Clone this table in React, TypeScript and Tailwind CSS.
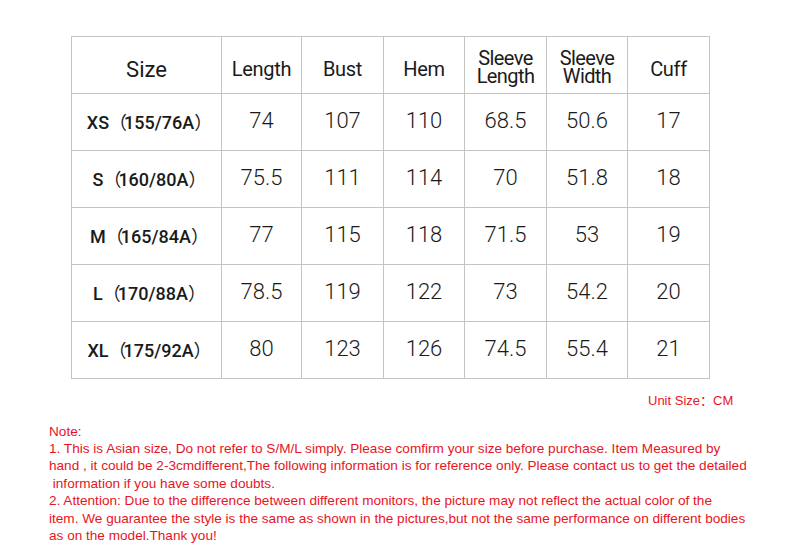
import React from 'react';

const headers = ['Length', 'Bust', 'Hem', 'Sleeve\nLength', 'Sleeve\nWidth', 'Cuff'];
const colWidths = ['w-[80px]', 'w-[82px]', 'w-[81px]', 'w-[82px]', 'w-[81px]', 'w-[82px]'];

const rows = [
    { size: 'XS', code: '155/76A', values: ['74', '107', '110', '68.5', '50.6', '17'] },
    { size: 'S', code: '160/80A', values: ['75.5', '111', '114', '70', '51.8', '18'] },
    { size: 'M', code: '165/84A', values: ['77', '115', '118', '71.5', '53', '19'] },
    { size: 'L', code: '170/88A', values: ['78.5', '119', '122', '73', '54.2', '20'] },
    { size: 'XL', code: '175/92A', values: ['80', '123', '126', '74.5', '55.4', '21'] },
];

const SizeChart = () => {
    return (
        <div className="w-[790px] h-[560px] bg-white overflow-hidden font-['Roboto','Noto_Sans_CJK_SC',sans-serif]">
            <div className="pt-[36px] pl-[71px]">
                <table className="border-collapse table-fixed text-[#1a1a1a]">
                    <thead>
                        <tr className="h-[57px]">
                            <th className="w-[150px] border border-[#c4c4c4] text-[22px] font-normal pt-[8px]">Size</th>
                            {headers.map((h, i) => (
                                <th
                                    key={h}
                                    className={`${colWidths[i]} border border-[#c4c4c4] font-normal ${h.includes('\n') ? 'text-[20px] leading-[18px] whitespace-pre-line tracking-[-0.6px] pt-[4px]' : 'text-[20px] tracking-[-0.3px] pt-[7px]'}`}
                                >
                                    {h}
                                </th>
                            ))}
                        </tr>
                    </thead>
                    <tbody>
                        {rows.map((r) => (
                            <tr key={r.size} className="h-[57px]">
                                <td className="border border-[#c4c4c4] text-center text-[18px] font-medium pb-[1px] pl-[6px]">
                                    {r.size}
                                    <span className="font-['Noto_Sans_CJK_SC',sans-serif] font-normal tracking-[-3px]">（</span>
                                    {r.code}
                                    <span className="font-['Noto_Sans_CJK_SC',sans-serif] font-normal">）</span>
                                </td>
                                {r.values.map((v, i) => (
                                    <td key={i} className="border border-[#c4c4c4] text-center text-[22px] font-light pb-[3px]">
                                        {v}
                                    </td>
                                ))}
                            </tr>
                        ))}
                    </tbody>
                </table>
            </div>

            <div className="pl-[648px] pt-[11px] text-[13px] text-[#e8141e] font-['Liberation_Sans',sans-serif]">
                Unit Size<span className="font-['Noto_Sans_CJK_SC',sans-serif]">：</span>CM
            </div>

            <div className="pl-[49px] pt-[12px] pr-[20px] text-[13.6px] leading-[17.4px] text-[#e8141e] font-['Liberation_Sans',sans-serif] whitespace-nowrap">
                <p>Note:</p>
                <p>1. This is Asian size, Do not refer to S/M/L simply. Please comfirm your size before purchase. Item Measured by</p>
                <p>hand , it could be 2-3cmdifferent,The following information is for reference only. Please contact us to get the detailed</p>
                <p>&nbsp;information if you have some doubts.</p>
                <p>2. Attention: Due to the difference between different monitors, the picture may not reflect the actual color of the</p>
                <p>item. We guarantee the style is the same as shown in the pictures,but not the same performance on different bodies</p>
                <p>as on the model.Thank you!</p>
            </div>
        </div>
    );
};

export default SizeChart;
